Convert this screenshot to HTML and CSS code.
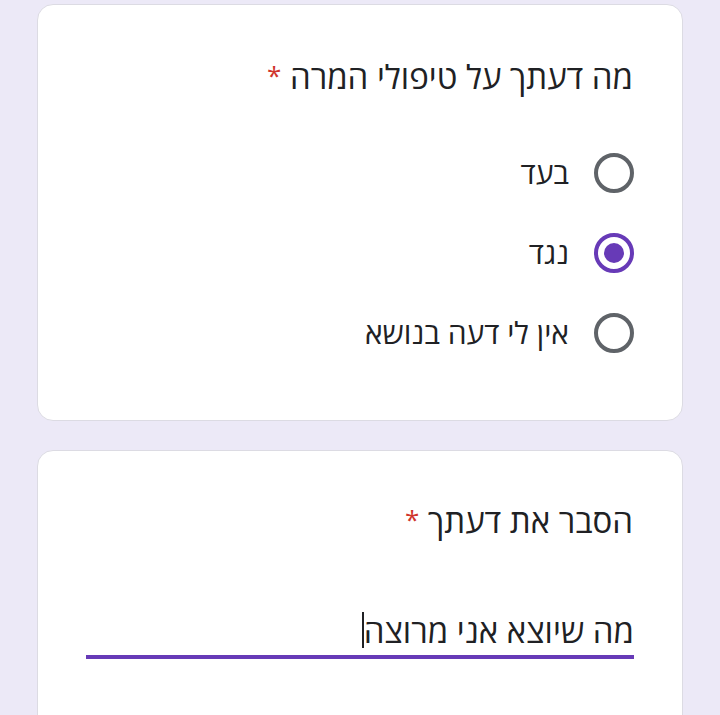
FILE: index.html
```html
<!DOCTYPE html>
<html lang="he" dir="rtl">
<head>
<meta charset="utf-8">
<link rel="stylesheet" href="styles.css">
</head>
<body>
<div class="page">
  <section class="card card-q1">
    <h2 class="q-title">מה דעתך על טיפולי המרה <span class="req">*</span></h2>
    <div class="options">
      <label class="opt"><span class="radio"></span><span class="opt-text">בעד</span></label>
      <label class="opt"><span class="radio checked"></span><span class="opt-text">נגד</span></label>
      <label class="opt"><span class="radio"></span><span class="opt-text">אין לי דעה בנושא</span></label>
    </div>
  </section>
  <section class="card card-q2">
    <h2 class="q-title">הסבר את דעתך <span class="req">*</span></h2>
    <div class="answer"><span class="answer-text">מה שיוצא אני מרוצה</span><span class="caret"></span></div>
  </section>
</div>
</body>
</html>
```
FILE: styles.css
```css
html, body {
  margin: 0;
  padding: 0;
  background: #ece9f7;
  font-family: "Open Sans", "DejaVu Sans", sans-serif;
  color: #202124;
  overflow: hidden;
}
.page {
  padding: 4px 37px 0 37px;
  display: flex;
  flex-direction: column;
  gap: 29px;
}
.card {
  background: #fff;
  border: 1.5px solid #dcdbe3;
  border-radius: 16px;
  box-sizing: border-box;
  padding: 0 48px 0 48px;
}
.card-q1 {
  height: 417px;
  padding-top: 48px;
}
.card-q2 {
  height: 290px;
  padding-top: 46px;
}
.q-title {
  margin: 0;
  font-weight: 400;
  font-size: 33px;
  line-height: 44px;
  padding-right: 1px;
}
.req {
  color: #d0342c;
  font-size: 26px;
  vertical-align: 4px;
}
.options {
  margin-top: 34px;
  display: flex;
  flex-direction: column;
}
.opt {
  display: flex;
  align-items: center;
  height: 80px;
  gap: 25px;
}
.radio {
  width: 40px;
  height: 40px;
  box-sizing: border-box;
  border: 4px solid #5f6368;
  border-radius: 50%;
  display: flex;
  align-items: center;
  justify-content: center;
  flex: none;
}
.radio.checked {
  border-color: #673ab7;
}
.radio.checked::after {
  content: "";
  width: 20px;
  height: 20px;
  border-radius: 50%;
  background: #673ab7;
}
.opt-text {
  font-size: 30px;
  line-height: 40px;
}
.answer {
  margin-top: 62px;
  border-bottom: 4px solid #673ab7;
  display: flex;
  align-items: center;
  height: 50px;
  font-size: 33px;
}
.caret {
  width: 2px;
  height: 36px;
  background: #202124;
}
```
